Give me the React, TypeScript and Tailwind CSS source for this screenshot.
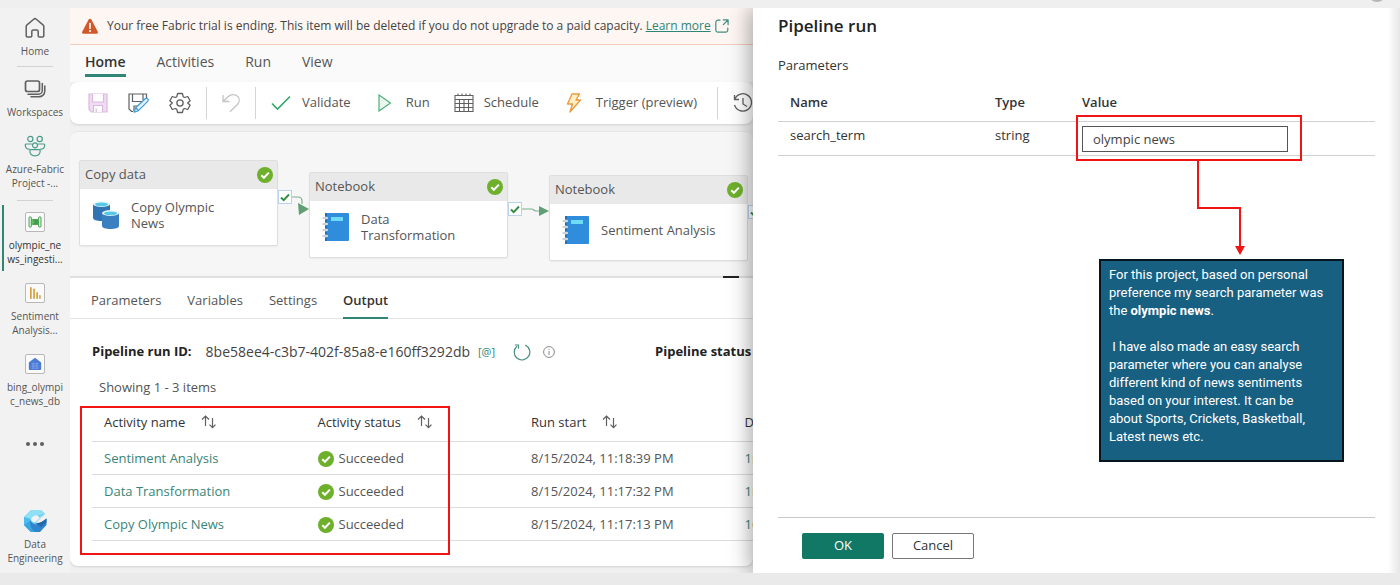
import { useState } from "react";
import type { ReactNode } from "react";
import clsx from "clsx";

const runs = [
  { name: "Sentiment Analysis", start: "8/15/2024, 11:18:39 PM", duration: "1m 20s" },
  { name: "Data Transformation", start: "8/15/2024, 11:17:32 PM", duration: "1m 4s" },
  { name: "Copy Olympic News", start: "8/15/2024, 11:17:13 PM", duration: "16s" },
];

/* ===== ICONS ===== */

function HomeIcon() {
  return (
    <svg width="22" height="22" viewBox="0 0 22 22" fill="none" stroke="#606060" strokeWidth="1.5" strokeLinejoin="round">
      <path d="M2.2 9.6c0-.7.3-1.300.8-1.700L9.700 2.200c.8-.7 1.900-.7 2.600 0L19 7.900c.5.400.8 1 .8 1.700v9.200c0 .7-.5 1.200-1.200 1.200h-3.200c-.7 0-1.200-.5-1.200-1.200v-4.300c0-.9-.7-1.500-1.500-1.500H9.300c-.8 0-1.500.6-1.500 1.500v4.300c0 .7-.5 1.200-1.200 1.200H3.400c-.7 0-1.200-.5-1.200-1.200z" />
    </svg>
  );
}

function WorkspacesIcon() {
  return (
    <svg width="22" height="20" viewBox="0 0 22 20" fill="none" stroke="#606060" strokeWidth="1.500" strokeLinecap="round">
      <rect x="1.500" y="2" width="14" height="10.500" rx="2" strokeWidth="1.700" />
      <path d="M4 15.200h10.500a3.800 3.800 0 0 0 3.800-3.800V4.500" />
      <path d="M7 17.800h8a5.800 5.800 0 0 0 5.800-5.800V7" />
    </svg>
  );
}

function TeamIcon() {
  return (
    <svg width="22" height="22" viewBox="0 0 22 22" fill="none" stroke="#4a9c8a" strokeWidth="1.200" strokeLinecap="round" strokeLinejoin="round">
      <circle cx="6.300" cy="4" r="2.600" />
      <circle cx="15.700" cy="4" r="2.600" />
      <circle cx="11" cy="10.300" r="2.500" />
      <path d="M7.500 9H2.200c-.5 0-.9.4-.9.9 0 2.600 1.500 4.200 4 4.300" />
      <path d="M14.500 9h5.300c.5 0 .9.4.9.9 0 2.600-1.500 4.200-4 4.300" />
      <path d="M6.700 14.700h8.600c.5 0 .9.4.9.9 0 3.400-1.900 5.300-5.200 5.300s-5.200-1.900-5.200-5.300c0-.5.4-.9.9-.9z" />
    </svg>
  );
}

function PipelineIcon() {
  return (
    <svg width="14" height="12" viewBox="0 0 14 12">
      <path d="M3 3.200h8v5.600H3z" fill="#62bd62" />
      <path d="M4.200 3.200 9.800 8.800V3.200zM9.800 3.200 4.200 8.800h5.600z" fill="#3f9a4b" />
      <rect x="1" y=".8" width="2.400" height="10.400" rx="1" fill="#d8f0d8" stroke="#4ba354" />
      <rect x="10.600" y=".8" width="2.400" height="10.400" rx="1" fill="#d8f0d8" stroke="#4ba354" />
    </svg>
  );
}

function ReportIcon() {
  return (
    <svg width="14" height="14" viewBox="0 0 14 14" fill="#d3a13f">
      <rect x="2" y="1" width="1.700" height="12" rx=".8" />
      <rect x="5.200" y="2.500" width="1.700" height="10.500" rx=".8" />
      <rect x="8.300" y="6" width="1.700" height="7" rx=".8" />
      <rect x="11.200" y="9" width="1.500" height="4" rx=".7" />
    </svg>
  );
}

function LakehouseIcon() {
  return (
    <svg width="14" height="14" viewBox="0 0 14 14">
      <path d="M7 .8 12.600 5c.4.400.6.800.6 1.300v5.400c0 .7-.5 1.300-1.300 1.300H2.100C1.300 13 .8 12.400.8 11.700V6.300c0-.5.2-.9.600-1.300z" fill="#4c7bd4" />
      <path d="M3.500 6.800h7M3.500 9h7M3.500 11.200h7M5.200 5.800v6M8.800 5.800v6" stroke="#8fb0ee" strokeWidth=".6" />
    </svg>
  );
}

function EngineeringIcon() {
  return (
    <svg width="24" height="24" viewBox="0 0 24 24">
      <path d="M8 1h10l4 4-8 7.500-6 10.500L1 16V8z" fill="#62cdee" />
      <path d="M8 1h10l4 3.500-8 2.500-5.500 3L1 8z" fill="#8fe0f5" />
      <path d="M1 8l6 2v5l3 8H8l-7-7z" fill="#4dbcf0" />
      <path d="M1 16l6-4 4 7 5 4H8z" fill="#39a5e3" />
      <path d="M7 11c2 4.500 7 5.500 11 2.500l5.500-4V16L17 23h-5c-3.500-2.500-5.500-7-5-12z" fill="#2f86cc" />
      <path d="M12.500 14.200c5-.2 8-2.200 11-4.700v4L18 18z" fill="#2469ad" />
      <path d="M21.800 4.800 12 13.400c-1.500.1-3-.9-4-2.400 0-2 2.500-4.500 5-4.500 2 0 3 .8 3 2.200z" fill="#f2f2f2" />
    </svg>
  );
}

function WarningIcon() {
  return (
    <svg width="18" height="17" viewBox="0 0 18 17" className="shrink-0">
      <path d="M7.800 1.300c.5-.9 1.900-.9 2.400 0l6.600 12.400c.5.900-.2 2-1.200 2H2.400c-1 0-1.700-1.100-1.200-2z" fill="#d0592b" />
      <path d="M9 5.500v5" stroke="#fff" strokeWidth="1.600" strokeLinecap="round" />
      <circle cx="9" cy="13" r="1" fill="#fff" />
    </svg>
  );
}

function OpenIcon() {
  return (
    <svg width="14" height="14" viewBox="0 0 14 14" fill="none" stroke="#3f8f80" strokeWidth="1.200" strokeLinecap="round" strokeLinejoin="round">
      <path d="M5 1.200H3A2.200 2.200 0 0 0 .8 3.400V11A2.200 2.200 0 0 0 3 13.200h7.600a2.200 2.200 0 0 0 2.200-2.200V9" />
      <path d="M8.300.9h4.800v4.800M13 1 8.300 5.700" />
    </svg>
  );
}

function SaveIcon() {
  return (
    <svg width="20" height="20" viewBox="0 0 20 20" fill="#f1dcf3" stroke="#dcb8e0" strokeWidth="1.200">
      <path d="M1 1h18v18H3.500L1 16.500z" />
      <path d="M4.500 1v8h11V1" fill="#fff" />
      <path d="M5.500 19v-6.500h9V19M8.200 19v-3.500" fill="#fff" />
    </svg>
  );
}

function SaveAsIcon() {
  return (
    <svg width="21" height="20" viewBox="0 0 21 20" fill="none" stroke="#606060" strokeWidth="1.200">
      <path d="M18.500 6V1H1v15l2.500 2.500H5M4.500 1v7.500H14M15 1v6M6 18.500V13h3" />
      <path d="m6.300 19.200 1.300-4.400 9.600-9c.8-.7 1.800-.7 2.500 0 .7.800.7 1.800 0 2.500l-9.300 9.400zM8 15l2.300 2.500" fill="#e3f3fc" stroke="#3d9bd8" strokeLinejoin="round" />
    </svg>
  );
}

function GearIcon() {
  return (
    <svg width="22" height="22" viewBox="0 0 22 22" fill="none" stroke="#606060" strokeWidth="1.300" strokeLinejoin="round">
      <path d="M8.600 1.500h4.800l.8 3.200 1.300.8 3.200-1 2.400 4.200-2.400 2.300 2.400 2.300-2.400 4.200-3.200-1-1.300.8-.8 3.200H8.600l-.8-3.200-1.300-.8-3.200 1L.9 13.300 3.300 11 .9 8.700l2.400-4.200 3.200 1 1.300-.8z" />
      <circle cx="11" cy="11" r="3.100" />
    </svg>
  );
}

function UndoIcon() {
  return (
    <svg width="18" height="20" viewBox="0 0 18 20" fill="none" stroke="#c4c4c4" strokeWidth="1.300">
      <path d="M1 2v6.500h6.500M1.300 8.200 6 3.700c3-3 7.500-2.700 9.700-.3 2.300 2.500 1.900 6-.5 8.300L8 18.800" />
    </svg>
  );
}

function CheckIcon() {
  return (
    <svg width="20" height="16" viewBox="0 0 20 16" fill="none" stroke="#2fa866" strokeWidth="1.600">
      <path d="m1 8.500 5.500 5.500L19 1.500" />
    </svg>
  );
}

function PlayIcon() {
  return (
    <svg width="14" height="18" viewBox="0 0 14 18" fill="#eaf7ef" stroke="#4faf78" strokeWidth="1.200">
      <path d="M1 1v16l11.500-8z" />
    </svg>
  );
}

function CalendarIcon() {
  return (
    <svg width="20" height="20" viewBox="0 0 20 20" fill="none" stroke="#606060" strokeWidth="1.100">
      <path d="M1 2.500h18v16H1zM1 6.500h18M1 10.500h18M1 14.500h18M5.500 6.500v12M10 6.500v12M14.500 6.500v12M4 .5v2M8 .5v2M12 .5v2M16 .5v2" />
    </svg>
  );
}

function BoltIcon() {
  return (
    <svg width="16" height="20" viewBox="0 0 16 20" fill="#fdf0c8" stroke="#ec9a3c" strokeWidth="1.400" strokeLinejoin="round">
      <path d="M6 1h7.500L10 7h4.500L4 19l2.500-8H1.500z" />
    </svg>
  );
}

function HistoryIcon() {
  return (
    <svg width="20" height="20" viewBox="0 0 20 20" fill="none" stroke="#606060" strokeWidth="1.300">
      <path d="M1.500 2v4.500H6M1.700 6.300A8.700 8.700 0 1 1 1.500 12M10 5v6l4 2.500" />
    </svg>
  );
}

function SuccessIcon() {
  return (
    <svg width="16" height="16" viewBox="0 0 16 16" className="shrink-0">
      <circle cx="8" cy="8" r="8" fill="#6eb02c" />
      <path d="m4.300 8.200 2.600 2.600 5-5.200" fill="none" stroke="#fff" strokeWidth="2" />
    </svg>
  );
}

function DatabasesIcon() {
  return (
    <svg width="28" height="30" viewBox="0 0 28 30" className="shrink-0">
      <path d="M1 4v14c0 1.700 3.800 3 8.500 3s8.500-1.300 8.500-3V4z" fill="#3273b4" />
      <ellipse cx="9.500" cy="4" rx="8.500" ry="3" fill="#e8f6fb" />
      <ellipse cx="9.500" cy="4.300" rx="6.500" ry="1.900" fill="#55c9e6" />
      <path d="M10 13v13c0 1.700 3.800 3 8.500 3s8.500-1.300 8.500-3V13z" fill="#3a7fc0" />
      <ellipse cx="18.500" cy="13" rx="8.500" ry="3" fill="#e8f6fb" />
      <ellipse cx="18.500" cy="13.300" rx="6.500" ry="1.900" fill="#55c9e6" />
    </svg>
  );
}

function NotebookIcon() {
  return (
    <svg width="28" height="30" viewBox="0 0 28 30" className="shrink-0">
      <rect x="3" y="1" width="24" height="28" rx="1" fill="#2f8ddb" />
      <path d="M3 1h2v28H3z" fill="#2270b8" />
      <rect x="9" y="5" width="12" height="4" fill="#6fdcf7" />
      <path d="M1 6h3.500M1 12h3.500M1 18h3.500M1 24h3.500" stroke="#fff" strokeWidth="2.600" strokeLinecap="round" />
      <path d="M1 6h3.500M1 12h3.500M1 18h3.500M1 24h3.500" stroke="#9aa5ad" strokeWidth="1.200" strokeLinecap="round" />
    </svg>
  );
}

function SortIcon() {
  return (
    <svg width="16" height="14" viewBox="0 0 16 14" fill="none" stroke="#606060" strokeWidth="1.200">
      <path d="M4.500 11V1M1 4.500 4.500 1 8 4.500M11.500 3v10M8.500 9.700l3 3 3-3" />
    </svg>
  );
}

function RefreshIcon() {
  return (
    <svg width="18" height="18" viewBox="0 0 18 18" fill="none" stroke="#4a8f84" strokeWidth="1.200">
      <path d="M12.300 2.100A7.800 7.800 0 1 1 4 3.200M1.800 2h3.700v3.700" />
    </svg>
  );
}

function InfoIcon() {
  return (
    <svg width="12" height="12" viewBox="0 0 12 12" fill="none" stroke="#8a8a8a">
      <circle cx="6" cy="6" r="5.400" />
      <path d="M6 5v4M6 3v1" />
    </svg>
  );
}

/* ===== SIDEBAR ===== */

type NavItemProps = { icon: ReactNode; lines: string[]; active?: boolean };

function NavItem({ icon, lines, active }: NavItemProps) {
  return (
    <a
      href="#"
      className={clsx(
        "flex w-full flex-col items-center gap-1 border-x-2 border-r-transparent text-[10px] leading-[14px]",
        active ? "border-l-[#2f8576] py-[5px] text-[#333]" : "border-l-transparent text-[#555]"
      )}
    >
      <span className="flex h-6 items-center">{icon}</span>
      <span className="text-center">
        {lines.map((line) => (
          <span key={line} className="block whitespace-nowrap">{line}</span>
        ))}
      </span>
    </a>
  );
}

function Tile({ children }: { children: ReactNode }) {
  return (
    <span className="flex size-5 items-center justify-center rounded-xs border border-[#b8b8b8] bg-[#fafafa]">
      {children}
    </span>
  );
}

function Sidebar() {
  return (
    <nav className="flex w-[70px] shrink-0 flex-col items-center bg-[#f2f2f2] px-0.5 pt-2 pb-2">
      <NavItem icon={<HomeIcon />} lines={["Home"]} />
      <hr className="mt-2 mb-[10px] w-9 border-[#d2d2d2]" />
      <NavItem icon={<WorkspacesIcon />} lines={["Workspaces"]} />
      <div className="h-[15px]" />
      <NavItem icon={<TeamIcon />} lines={["Azure-Fabric", "Project -..."]} />
      <hr className="mt-[10px] mb-1 w-9 border-[#d2d2d2]" />
      <NavItem icon={<Tile><PipelineIcon /></Tile>} lines={["olympic_ne", "ws_ingesti..."]} active />
      <div className="h-[10px]" />
      <NavItem icon={<Tile><ReportIcon /></Tile>} lines={["Sentiment", "Analysis..."]} />
      <div className="h-[15px]" />
      <NavItem icon={<Tile><LakehouseIcon /></Tile>} lines={["bing_olympi", "c_news_db"]} />
      <button aria-label="More" className="mt-[30px] flex gap-[3px] p-1">
        <span className="size-1 rounded-full bg-[#606060]" />
        <span className="size-1 rounded-full bg-[#606060]" />
        <span className="size-1 rounded-full bg-[#606060]" />
      </button>
      <div className="mt-auto w-full">
        <NavItem icon={<EngineeringIcon />} lines={["Data", "Engineering"]} />
      </div>
    </nav>
  );
}

/* ===== TOP BAR ===== */

function TrialBanner() {
  return (
    <div className="flex h-[37px] items-center border-b border-[#f3cdbc] bg-[#fdf6f3] pl-[11px] text-xs whitespace-nowrap text-[#444]">
      <WarningIcon />
      <span className="ml-2">
        Your free Fabric trial is ending. This item will be deleted if you do not upgrade to a paid capacity.{" "}
        <a href="#" className="text-[#2f8576] underline">Learn more</a>
      </span>
      <span className="ml-1"><OpenIcon /></span>
    </div>
  );
}

function MenuTabs() {
  return (
    <div className="flex h-[37px] gap-[31px] bg-[#fafafa] pt-1 pb-[5px] pl-[15px] text-sm text-[#555]">
      <button className="border-b-3 border-[#2f8576] font-semibold text-[#333]">Home</button>
      <button className="border-b-3 border-transparent">Activities</button>
      <button className="border-b-3 border-transparent">Run</button>
      <button className="border-b-3 border-transparent">View</button>
    </div>
  );
}

function Separator() {
  return <div className="h-8 w-px shrink-0 bg-[#d4d4d4]" />;
}

function Toolbar() {
  return (
    <div className="flex h-[42px] shrink-0 items-center rounded-lg bg-white pl-[18px] text-[13px] whitespace-nowrap text-[#555] shadow">
      <div className="flex shrink-0 items-center gap-5 pr-[15px]">
        <button aria-label="Save"><SaveIcon /></button>
        <button aria-label="Save as"><SaveAsIcon /></button>
        <button aria-label="Settings"><GearIcon /></button>
      </div>
      <Separator />
      <button aria-label="Undo" className="shrink-0 px-[15px]"><UndoIcon /></button>
      <Separator />
      <button className="ml-[15px] flex shrink-0 items-center gap-[11px]"><CheckIcon />Validate</button>
      <button className="ml-[27px] flex shrink-0 items-center gap-[14px]"><PlayIcon />Run</button>
      <button className="ml-6 flex shrink-0 items-center gap-[10px]"><CalendarIcon />Schedule</button>
      <button className="mr-5 ml-[27px] flex shrink-0 items-center gap-[14px]"><BoltIcon />Trigger (preview)</button>
      <Separator />
      <button aria-label="Run history" className="ml-[15px] shrink-0"><HistoryIcon /></button>
    </div>
  );
}

/* ===== CANVAS ===== */

type NodeProps = { place: string; kind: string; title: string; icon: ReactNode };

function ActivityNode({ place, kind, title, icon }: NodeProps) {
  return (
    <div className={clsx("absolute flex h-[86px] w-[199px] flex-col rounded-xs border border-[#dedede] bg-white text-[#555] shadow-xs", place)}>
      <div className="flex h-7 items-center justify-between bg-[#e9e9e9] pr-1 pl-[5px] text-[13px]">
        {kind}
        <SuccessIcon />
      </div>
      <div className="flex flex-1 items-center gap-[11px] pb-1 pl-3 text-[13px] leading-4">
        {icon}
        <span className="w-[118px]">{title}</span>
      </div>
    </div>
  );
}

function Port({ place }: { place: string }) {
  return (
    <div className={clsx("absolute flex size-[14px] items-center justify-center border border-[#b7d3ee] bg-white", place)}>
      <svg width="10" height="9" viewBox="0 0 10 9" fill="none" stroke="#2f8f3d" strokeWidth="1.900">
        <path d="m1 4.500 2.700 2.700L9 1.500" />
      </svg>
    </div>
  );
}

function Canvas() {
  return (
    <div className="relative mt-[7px] h-[145px] shrink-0 overflow-hidden rounded-t-lg border-t border-[#e8e8e8] bg-[#f6f6f6]">
      <svg width="690" height="145" className="absolute top-0 left-0" fill="none" stroke="#7fb08c" strokeWidth="1.200">
        <path d="M222 65h6c3 0 4 1 4 4v3M452 77h10c1 0 2 2 4 2h5" />
        <path d="m228 71 11 6-10 6zM469 74l10 5-10 5z" fill="#5f9f73" stroke="none" />
      </svg>
      <ActivityNode place="top-7 left-[9px]" kind="Copy data" title="Copy Olympic News" icon={<DatabasesIcon />} />
      <ActivityNode place="top-10 left-[239px]" kind="Notebook" title="Data Transformation" icon={<NotebookIcon />} />
      <ActivityNode place="top-[43px] left-[479px]" kind="Notebook" title="Sentiment Analysis" icon={<NotebookIcon />} />
      <Port place="top-[58px] left-[208px]" />
      <Port place="top-[70px] left-[438px]" />
      <Port place="top-[73px] left-[678px]" />
    </div>
  );
}

/* ===== OUTPUT ===== */

function HeaderCell({ label }: { label: string }) {
  return (
    <th className="pl-3 text-left font-medium">
      <button className="flex items-center gap-4">
        {label}
        <SortIcon />
      </button>
    </th>
  );
}

function OutputTable() {
  return (
    <div className="relative mx-[22px] mt-[9px]">
      <table className="w-[854px] table-fixed border-collapse text-[13px] whitespace-nowrap text-[#555]">
        <thead>
          <tr className="h-[37px] border-b border-[#dcdcdc] text-[#333]">
            <HeaderCell label="Activity name" />
            <HeaderCell label="Activity status" />
            <HeaderCell label="Run start" />
            <HeaderCell label="Duration" />
          </tr>
        </thead>
        <tbody>
          {runs.map((run) => (
            <tr key={run.name} className="h-[33px] border-b border-[#dcdcdc]">
              <td className="pt-0.5 pl-3"><a href="#" className="text-[#3a8576]">{run.name}</a></td>
              <td className="pt-0.5 pl-3">
                <span className="flex items-center gap-[5px]"><SuccessIcon />Succeeded</span>
              </td>
              <td className="pt-0.5 pl-3">{run.start}</td>
              <td className="pt-0.5 pl-3 text-[#3a8576]">{run.duration}</td>
            </tr>
          ))}
        </tbody>
      </table>
      {/* highlight around the first two columns */}
      <div className="pointer-events-none absolute top-0.5 -left-3 h-[149px] w-[370px] border-2 border-[#f01414]" />
    </div>
  );
}

function OutputPanel() {
  const [tab, setTab] = useState("Output");
  return (
    <section className="relative flex-1 rounded-b-lg border-t-2 border-[#e0e0e0] bg-white shadow">
      <div className="absolute -top-0.5 left-[653px] h-0.5 w-4 bg-[#222]" />
      <div className="flex h-[41px] gap-[26px] border-b border-[#e4e4e4] pt-[6px] pl-[21px] text-[13px] text-[#555]">
        {["Parameters", "Variables", "Settings", "Output"].map((name) => (
          <button
            key={name}
            onClick={() => setTab(name)}
            className={clsx("-mb-px border-b-2", tab === name ? "border-[#2f8576] font-semibold text-[#333]" : "border-transparent")}
          >
            {name}
          </button>
        ))}
      </div>
      <div className="flex h-[60px] items-center pt-[6px] pl-[22px] text-[13px] whitespace-nowrap text-[#444]">
        <b className="text-[#222]">Pipeline run ID:</b>
        <span className="ml-[14px] text-sm">8be58ee4-c3b7-402f-85a8-e160ff3292db</span>
        <span className="ml-2 text-[11px] text-[#2f8576]">[@]</span>
        <button aria-label="Refresh" className="ml-[18px]"><RefreshIcon /></button>
        <button aria-label="Info" className="ml-3"><InfoIcon /></button>
        <b className="ml-[100px] text-[#222]">Pipeline status</b>
      </div>
      <p className="pl-[29px] text-[13px] leading-4 text-[#555]">Showing 1 - 3 items</p>
      <OutputTable />
    </section>
  );
}

/* ===== RUN PANE ===== */

function Callout() {
  return (
    <div className="font-['Roboto',sans-serif]">
      <div className="pointer-events-none absolute -top-[11px] -left-[6px] h-[46px] w-[226px] border-2 border-[#f01414]" />
      <svg width="60" height="95" viewBox="0 0 60 95" className="absolute top-[34px] left-[110px]" fill="none" stroke="#f01414" strokeWidth="2">
        <path d="M6 0v48h42v38" />
        <path d="M43 86h10l-5 9z" fill="#f01414" stroke="none" />
      </svg>
      <div className="absolute top-[133px] left-[17px] w-[245px] border-2 border-[#06141c] bg-[#176082] pt-[5px] pr-4 pb-[14px] pl-2 text-[13px] leading-[18px] text-white">
        <p>
          For this project, based on personal preference my search parameter was the <b>olympic news</b>.
        </p>
        <p className="mt-[18px]">
          &nbsp;I have also made an easy search parameter where you can analyse different kind of news sentiments based on your interest. It can be about Sports, Crickets, Basketball, Latest news etc.
        </p>
      </div>
    </div>
  );
}

function RunPane() {
  const [term, setTerm] = useState("olympic news");
  return (
    <aside className="relative z-10 flex w-[647px] shrink-0 flex-col bg-white px-[25px] text-[13px] text-[#333] shadow-[-3px_0_20px_rgba(0,0,0,0.35)]">
      <h1 className="mt-1 text-[17px] leading-7 font-semibold text-[#222]">Pipeline run</h1>
      <h2 className="mt-[15px] leading-5">Parameters</h2>
      <table className="mt-[10px] w-full table-fixed border-collapse text-left">
        <thead>
          <tr className="h-9 border-b border-[#d0d0d0]">
            <th className="w-[205px] pl-3 font-semibold">Name</th>
            <th className="w-[87px] pl-3 font-semibold">Type</th>
            <th className="pl-3 font-semibold"><label htmlFor="term">Value</label></th>
          </tr>
        </thead>
        <tbody>
          <tr className="h-[34px] border-b border-[#d0d0d0] align-top">
            <td className="pt-1 pl-3">search_term</td>
            <td className="pt-1 pl-3">string</td>
            <td className="pt-1 pl-3">
              <div className="relative">
                <input
                  id="term"
                  value={term}
                  onChange={(e) => setTerm(e.target.value)}
                  className="block h-[26px] w-[206px] border border-[#555] bg-white px-[10px] text-[#444]"
                />
                <Callout />
              </div>
            </td>
          </tr>
        </tbody>
      </table>
      <div className="mt-auto flex gap-2 border-t border-[#c8c8c8] pt-[15px] pb-[14px] pl-6">
        <button className="h-[26px] w-[82px] rounded-xs bg-[#117865] text-white">OK</button>
        <button className="h-[26px] w-[82px] rounded-xs border border-[#777] bg-white">Cancel</button>
      </div>
      <div className="pointer-events-none absolute inset-y-0 right-0 w-3 bg-gradient-to-r from-transparent to-black/10" />
    </aside>
  );
}

export default function App() {
  return (
    <div className="flex h-screen flex-col overflow-hidden bg-[#eaeaea] font-['Open_Sans','Noto_Sans',sans-serif]">
      <div className="flex h-2 shrink-0 justify-end overflow-hidden bg-[#efefef] pr-[14px]">
        <div className="-mt-4 size-[18px] rounded-full bg-[#b5b5b5]" />
      </div>
      <div className="flex min-h-0 flex-1 overflow-hidden">
        <Sidebar />
        <main className="flex min-w-0 flex-1 flex-col overflow-hidden bg-[#f0f0f0] pb-[7px]">
          <TrialBanner />
          <MenuTabs />
          <Toolbar />
          <Canvas />
          <OutputPanel />
        </main>
        <RunPane />
      </div>
      <div className="h-3 shrink-0" />
    </div>
  );
}
